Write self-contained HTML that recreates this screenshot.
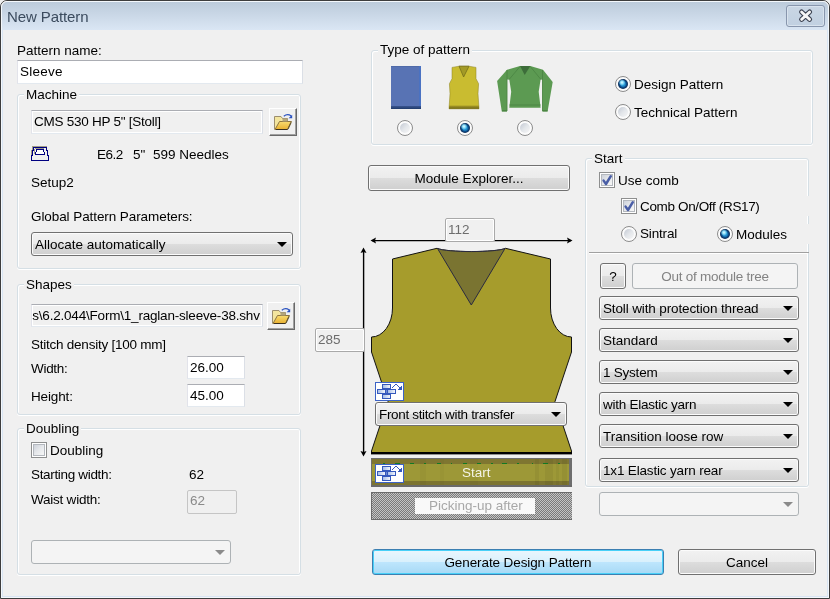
<!DOCTYPE html>
<html><head><meta charset="utf-8">
<style>
*,*::before,*::after{margin:0;padding:0;box-sizing:border-box}
html,body{width:830px;height:599px;overflow:hidden;background:#f0f0f0}
body{position:relative;font-family:"Liberation Sans",sans-serif;font-size:13.5px;color:#000}
.a{position:absolute}
.t{position:absolute;will-change:transform;font-size:13.5px;line-height:15px;white-space:nowrap}
.gb{position:absolute;border:1px solid #d5dfe5;border-radius:3px;box-shadow:inset 1px 1px 0 #fff,inset -1px 0 0 #fff,0 1px 0 #fff}
.gt{position:absolute;will-change:transform;background:#f0f0f0;padding:0 2px;font-size:13.5px;line-height:15px;white-space:nowrap}
.btn{position:absolute;will-change:transform;border:1px solid #707070;border-radius:3px;background:linear-gradient(#f2f2f2,#ebebeb 50%,#dddddd 50%,#cfcfcf);box-shadow:inset 0 0 0 1px #fbfbfb;text-align:center;line-height:22px;white-space:nowrap}
.dd{position:absolute;border:1px solid #707070;border-radius:3px;background:linear-gradient(#f2f2f2,#ebebeb 50%,#dddddd 50%,#cfcfcf);box-shadow:inset 0 0 0 1px #fbfbfb;white-space:nowrap}
.dd span{position:absolute;will-change:transform;left:3px;top:4px;line-height:15px}
.arr{position:absolute;right:5px;top:9px;width:0;height:0;border-left:5px solid transparent;border-right:5px solid transparent;border-top:5px solid #000}
.ed{position:absolute;background:#fff;border:1px solid #e3e9ef;border-top-color:#abadb3;border-left-color:#e2e3ea;border-right-color:#dbdfe6}
.ro{position:absolute;background:#f0f0f0;border:1px solid #e3e9ef;border-top-color:#abadb3;border-left-color:#e2e3ea;border-right-color:#dbdfe6;box-shadow:inset 0 0 0 1px #fff}
.rad{position:absolute;width:16px;height:16px;border-radius:50%;border:1px solid #8c8c8c;background:#fbfbfb}
.rad::before{content:"";position:absolute;left:2px;top:2px;width:10px;height:10px;border-radius:50%;background:linear-gradient(135deg,#c3c9d3,#e3e6ea 50%,#f6f6f6)}
.rad.on::before{left:2px;top:2px;width:10px;height:10px;background:radial-gradient(circle at 40% 35%,#e9fcff 0,#8ee0fa 16%,rgba(60,170,230,0) 38%),radial-gradient(circle at 50% 50%,#33a6e0 0,#1d8ccc 30%,#0d4a86 50%,#0a2c58 68%,#0b2448 100%)}
.chk{position:absolute;width:16px;height:16px;border:1px solid #8e8f8f;background:#fff}
.chk::before{content:"";position:absolute;left:1px;top:1px;width:12px;height:12px;border:1px solid #b4b8be;background:linear-gradient(135deg,#cdd2da,#e6e8eb 50%,#f7f7f7)}
.chk.on::after{content:"";position:absolute;left:0;top:0;width:14px;height:14px;background:no-repeat center/14px 14px}
</style></head><body>

<svg width="0" height="0" style="position:absolute"><defs><linearGradient id="brk" x1="0" y1="0" x2="1" y2="0"><stop offset="0" stop-color="#a7bee8"/><stop offset="1" stop-color="#f2f5fb"/></linearGradient></defs></svg>
<!-- window frame -->
<div class="a" style="left:0;top:0;width:830px;height:599px;border:1px solid #3d3d3d;border-radius:7px 7px 0 0;background:#f0f0f0"></div>
<div class="a" style="left:1px;top:1px;width:828px;height:597px;border:1px solid #f4f8fc;border-radius:6px 6px 0 0"></div>
<div class="a" style="left:2px;top:2px;width:826px;height:28px;background:linear-gradient(#bccbdb,#dae6f4);border-radius:5px 5px 0 0"></div>
<div class="a" style="left:2px;top:30px;width:826px;height:567px;border:1px solid #d9e5f3;border-top:0"></div>
<div class="t" style="left:7px;top:8px;font-size:15px;line-height:17px;color:#3b4b5e;letter-spacing:-0.1px">New Pattern</div>
<!-- close button -->
<div class="a" style="left:786px;top:5px;width:39px;height:22px;border:1px solid #8896ad;border-radius:3px;background:linear-gradient(#c9d6e4,#c1d0e1);box-shadow:inset 0 0 0 1px #d9e3ee"></div>
<svg class="a" style="left:786px;top:5px" width="39" height="22" viewBox="786 5 39 22">
<path d="M801.6 12 L805.6 15.7 L809.6 12 M801.6 19.4 L805.6 15.7 L809.6 19.4" stroke="#3b4150" stroke-width="5" stroke-linecap="round" stroke-linejoin="round" fill="none"/>
<path d="M801.6 12 L805.6 15.7 L809.6 12 M801.6 19.4 L805.6 15.7 L809.6 19.4" stroke="#f6f6f6" stroke-width="2.8" stroke-linecap="round" stroke-linejoin="round" fill="none"/>
</svg>

<!-- LEFT PANEL -->
<div class="t" style="left:17px;top:43px">Pattern name:</div>
<div class="ed" style="left:17px;top:60px;width:286px;height:24px"></div>
<div class="t" style="left:20px;top:64px;letter-spacing:0.26px">Sleeve</div>

<div class="gb" style="left:17px;top:94px;width:284px;height:175px"></div>
<div class="gt" style="left:24px;top:87px">Machine</div>
<div class="ro" style="left:31px;top:110px;width:232px;height:24px"></div>
<div class="t" style="left:34px;top:114px;letter-spacing:-0.25px">CMS 530 HP 5" [Stoll]</div>
<div class="a" style="left:269px;top:108px;width:28px;height:28px;border:1px solid;border-color:#fff #696969 #696969 #fff;background:#f0f0f0;box-shadow:inset -1px -1px 0 #a0a0a0"></div>
<svg class="a" style="left:269px;top:108px" width="28" height="28" viewBox="269 108 28 28">
<defs><linearGradient id="fg269" x1="0" y1="0" x2="0" y2="1"><stop offset="0" stop-color="#f9dc70"/><stop offset="1" stop-color="#e8b030"/></linearGradient></defs>
<path d="M274.5 129.5 L274.5 116.5 L281 116.5 L282.5 118.5 L287.5 118.5 L287.5 122" fill="#f5e8a6" stroke="#9c8e6e" stroke-width="1"/>
<rect x="275" y="117" width="6" height="12" fill="#f3e59e"/>
<path d="M275 129.5 L279.5 121.5 L291.5 121.5 L287.5 129.5 Z" fill="url(#fg269)" stroke="#8c7440" stroke-width="1" stroke-linejoin="round"/>
<path d="M276 129.5 L287.5 129.5" stroke="#3a3020" stroke-width="1"/><rect x="282.5" y="118.5" width="5" height="3" fill="#b3a57c"/>
<path d="M288 129 L291 122.5" stroke="#6a5a30" stroke-width="1.2"/>
<path d="M283.8 116.2 Q287.5 113.2 291.2 116" stroke="#2a52c0" stroke-width="1.2" fill="none"/>
<path d="M292.2 114.8 L292.2 118.2 L288.6 118.2 Z" fill="#2a52c0"/>
</svg>
<svg class="a" style="left:28px;top:144px" width="24" height="20" viewBox="28 144 24 20" shape-rendering="crispEdges">
<rect x="32" y="146" width="15" height="1" fill="#a09c88"/>
<rect x="32" y="147" width="1" height="3" fill="#a09c88"/>
<rect x="31" y="150" width="1" height="5" fill="#a09c88"/>
<rect x="34" y="149" width="1" height="5" fill="#a09c88"/>
<rect x="35" y="148" width="9" height="1" fill="#a09c88"/>
<g fill="#000080">
<rect x="33" y="147" width="14" height="1"/>
<rect x="33" y="147" width="1" height="4"/><rect x="46" y="147" width="1" height="4"/>
<rect x="32" y="150" width="1" height="6"/><rect x="47" y="150" width="1" height="6"/>
<rect x="31" y="155" width="1" height="6"/><rect x="48" y="155" width="1" height="6"/>
<rect x="31" y="160" width="18" height="1"/>
<rect x="36" y="149" width="8" height="1"/>
<rect x="36" y="149" width="1" height="3"/><rect x="43" y="149" width="1" height="3"/>
<rect x="35" y="152" width="1" height="3"/><rect x="44" y="152" width="1" height="3"/>
<rect x="35" y="154" width="10" height="1"/>
</g>
<rect x="37" y="150" width="6" height="2" fill="#fff"/><rect x="36" y="152" width="8" height="2" fill="#fff"/>
</svg>
<div class="t" style="left:97px;top:147px;letter-spacing:-0.5px">E6.2</div>
<div class="t" style="left:133px;top:147px">5"</div>
<div class="t" style="left:153px;top:147px">599 Needles</div>
<div class="t" style="left:31px;top:175px">Setup2</div>
<div class="t" style="left:31px;top:209px;letter-spacing:-0.08px">Global Pattern Parameters:</div>
<div class="dd" style="left:31px;top:232px;width:262px;height:24px"><span>Allocate automatically</span><i class="arr"></i></div>

<div class="gb" style="left:17px;top:284px;width:284px;height:131px"></div>
<div class="gt" style="left:24px;top:277px">Shapes</div>
<div class="ro" style="left:31px;top:304px;width:232px;height:23px;overflow:hidden"><div class="t" style="right:2px;top:3px;letter-spacing:-0.2px">C:\Stoll\M1plus\6.2.044\Form\1_raglan-sleeve-38.shv</div></div>
<div class="a" style="left:267px;top:302px;width:28px;height:28px;border:1px solid;border-color:#fff #696969 #696969 #fff;background:#f0f0f0;box-shadow:inset -1px -1px 0 #a0a0a0"></div>
<svg class="a" style="left:267px;top:302px" width="28" height="28" viewBox="269 108 28 28">
<defs><linearGradient id="fg267" x1="0" y1="0" x2="0" y2="1"><stop offset="0" stop-color="#f9dc70"/><stop offset="1" stop-color="#e8b030"/></linearGradient></defs>
<path d="M274.5 129.5 L274.5 116.5 L281 116.5 L282.5 118.5 L287.5 118.5 L287.5 122" fill="#f5e8a6" stroke="#9c8e6e" stroke-width="1"/>
<rect x="275" y="117" width="6" height="12" fill="#f3e59e"/>
<path d="M275 129.5 L279.5 121.5 L291.5 121.5 L287.5 129.5 Z" fill="url(#fg267)" stroke="#8c7440" stroke-width="1" stroke-linejoin="round"/>
<path d="M276 129.5 L287.5 129.5" stroke="#3a3020" stroke-width="1"/><rect x="282.5" y="118.5" width="5" height="3" fill="#b3a57c"/>
<path d="M288 129 L291 122.5" stroke="#6a5a30" stroke-width="1.2"/>
<path d="M283.8 116.2 Q287.5 113.2 291.2 116" stroke="#2a52c0" stroke-width="1.2" fill="none"/>
<path d="M292.2 114.8 L292.2 118.2 L288.6 118.2 Z" fill="#2a52c0"/>
</svg>
<div class="t" style="left:31px;top:337px;letter-spacing:-0.24px">Stitch density [100 mm]</div>
<div class="t" style="left:31px;top:361px;letter-spacing:-0.3px">Width:</div>
<div class="ed" style="left:187px;top:356px;width:58px;height:23px"></div>
<div class="t" style="left:190px;top:360px">26.00</div>
<div class="t" style="left:31px;top:389px;letter-spacing:-0.13px">Height:</div>
<div class="ed" style="left:187px;top:384px;width:58px;height:23px"></div>
<div class="t" style="left:190px;top:388px">45.00</div>

<div class="gb" style="left:17px;top:428px;width:284px;height:147px"></div>
<div class="gt" style="left:24px;top:421px">Doubling</div>
<div class="chk" style="left:31px;top:442px"></div>
<div class="t" style="left:50px;top:443px">Doubling</div>
<div class="t" style="left:31px;top:467px;letter-spacing:-0.33px">Starting width:</div>
<div class="t" style="left:189px;top:467px">62</div>
<div class="t" style="left:31px;top:492px;letter-spacing:-0.23px">Waist width:</div>
<div class="a" style="left:187px;top:490px;width:50px;height:24px;border:1px solid #c5c5c5;background:#f0f0f0;border-radius:2px"></div>
<div class="t" style="left:190px;top:493px;color:#8a8a8a">62</div>
<div class="a" style="left:31px;top:540px;width:200px;height:24px;border:1px solid #adb2b5;border-radius:3px;background:#f4f4f4"><i class="arr" style="border-top-color:#8a8a8a"></i></div>


<!-- TYPE OF PATTERN -->
<div class="gb" style="left:371px;top:50px;width:442px;height:95px"></div>
<div class="gt" style="left:378px;top:42px">Type of pattern</div>
<svg class="a" style="left:380px;top:60px" width="190" height="60" viewBox="380 60 190 60">
<defs>
<linearGradient id="bb" x1="0" y1="0" x2="0" y2="1"><stop offset="0" stop-color="#3a5590"/><stop offset="1" stop-color="#1f3a6a"/></linearGradient>
<linearGradient id="yb" x1="0" y1="0" x2="0" y2="1"><stop offset="0" stop-color="#a99c28"/><stop offset="1" stop-color="#6f6618"/></linearGradient>
</defs>
<rect x="391" y="66" width="30" height="43" fill="#5873b4"/>
<rect x="391" y="66" width="30" height="1" fill="#4f6aa8"/>
<rect x="419" y="66" width="2" height="40" fill="#4a72c2"/>
<rect x="391" y="106" width="30" height="3" fill="url(#bb)"/>
<path d="M452 67.4 L459 66.2 L469 66.2 L476 67.4 L476 78.7 L478.6 83.7 L478 93.7 L479 108.8 L449 108.8 L450 93.7 L449.4 83.7 L452 78.7 Z" fill="#c9bc30" stroke="#8a8020" stroke-width="0.5"/>
<path d="M459 66.2 L469 66.2 L463.6 77 Z" fill="#a39a26" stroke="#6f6818" stroke-width="0.7"/>
<rect x="449" y="105.5" width="30" height="3.3" fill="url(#yb)"/>
<path d="M520 66 L530.3 66 L543 69.8 L552.7 82 L547.6 111.4 L542.5 111.4 L542.5 79.6 L540.6 79.6 L538.7 91.8 L540.6 107.7 L509.3 107.7 L511.2 91.8 L509.3 79.6 L507 79.6 L507 111.4 L501.8 111.4 L497.1 81 L507 69.8 Z" fill="#5c9a52"/>
<path d="M520 66 L530.3 66 L524.7 75 Z" fill="#3d6d3a"/>
<path d="M520 66.5 L509 79.6 M530.3 66.5 L541 79.6 M507 70 L507 111 M542.5 70 L542.5 111" stroke="#4c8644" stroke-width="0.9" fill="none"/>
<rect x="509.5" y="104.5" width="31" height="1" fill="#4c8644"/>
<rect x="502" y="110" width="5" height="1.4" fill="#4c8644"/>
<rect x="542.5" y="110" width="5" height="1.4" fill="#4c8644"/>
</svg>
<div class="rad" style="left:397px;top:120px"></div>
<div class="rad on" style="left:457px;top:120px"></div>
<div class="rad" style="left:517px;top:120px"></div>
<div class="rad on" style="left:615px;top:76px"></div>
<div class="t" style="left:634px;top:77px">Design Pattern</div>
<div class="rad" style="left:615px;top:104px"></div>
<div class="t" style="left:634px;top:105px">Technical Pattern</div>

<!-- MODULE EXPLORER -->
<div class="btn" style="left:368px;top:165px;width:202px;height:26px;line-height:26px">Module Explorer...</div>

<!-- START GROUP -->
<div class="gb" style="left:585px;top:158px;width:224px;height:329px"></div>
<div class="gt" style="left:592px;top:151px">Start</div>
<div class="chk" style="left:599px;top:172px"><svg class="a" style="left:0;top:0" width="14" height="14" viewBox="0 0 14 14"><path d="M3.6 7.6 L6 11 L10.8 3.2" stroke="#4a5ea6" stroke-width="2.5" fill="none" stroke-linecap="round" stroke-linejoin="round"/></svg></div>
<div class="t" style="left:618px;top:173px">Use comb</div>
<div class="chk" style="left:621px;top:198px"><svg class="a" style="left:0;top:0" width="14" height="14" viewBox="0 0 14 14"><path d="M3.6 7.6 L6 11 L10.8 3.2" stroke="#4a5ea6" stroke-width="2.5" fill="none" stroke-linecap="round" stroke-linejoin="round"/></svg></div>
<div class="t" style="left:640px;top:199px;letter-spacing:-0.35px">Comb On/Off (RS17)</div>
<div class="rad" style="left:621px;top:226px"></div>
<div class="t" style="left:640px;top:226px;letter-spacing:-0.17px">Sintral</div>
<div class="rad on" style="left:717px;top:226px"></div>
<div class="t" style="left:736px;top:227px">Modules</div>
<div class="a" style="left:806px;top:196px;width:4px;height:20px;background:#f0f0f0"></div>
<div class="a" style="left:806px;top:224px;width:4px;height:20px;background:#f0f0f0"></div>
<div class="a" style="left:589px;top:252px;width:220px;height:1px;background:#a0a0a0"></div>
<div class="a" style="left:589px;top:253px;width:219px;height:1px;background:#fff"></div>
<div class="btn" style="left:600px;top:263px;width:26px;height:26px;line-height:26px">?</div>
<div class="a" style="will-change:transform;left:632px;top:263px;width:166px;height:26px;border:1px solid #adb2b5;border-radius:3px;background:#f4f4f4;color:#838383;text-align:center;line-height:25px;letter-spacing:-0.23px">Out of module tree</div>
<div class="dd" style="left:599px;top:296px;width:200px;height:24px"><span style="letter-spacing:-0.13px">Stoll with protection thread</span><i class="arr"></i></div>
<div class="dd" style="left:599px;top:328px;width:200px;height:24px"><span>Standard</span><i class="arr"></i></div>
<div class="dd" style="left:599px;top:360px;width:200px;height:24px"><span style="letter-spacing:-0.23px">1 System</span><i class="arr"></i></div>
<div class="dd" style="left:599px;top:392px;width:200px;height:24px"><span style="letter-spacing:-0.25px">with Elastic yarn</span><i class="arr"></i></div>
<div class="dd" style="left:599px;top:424px;width:200px;height:24px"><span>Transition loose row</span><i class="arr"></i></div>
<div class="dd" style="left:599px;top:458px;width:200px;height:24px"><span style="letter-spacing:-0.17px">1x1 Elastic yarn rear</span><i class="arr"></i></div>
<div class="a" style="left:599px;top:492px;width:200px;height:24px;border:1px solid #adb2b5;border-radius:3px;background:#f4f4f4"><i class="arr" style="border-top-color:#8a8a8a"></i></div>


<!-- CENTER SHAPE -->
<svg class="a" style="left:300px;top:210px" width="290" height="320" viewBox="300 210 290 320" shape-rendering="geometricPrecision">
<defs>
<pattern id="chk" x="371" y="492" width="2" height="2" patternUnits="userSpaceOnUse"><rect width="2" height="2" fill="#c4c4c4"/><rect width="1" height="1" fill="#7a7a7a"/><rect x="1" y="1" width="1" height="1" fill="#7a7a7a"/></pattern>
</defs>
<!-- arrows -->
<line x1="372" y1="240.6" x2="571" y2="240.6" stroke="#000" stroke-width="1.4"/>
<path d="M370.5 240.5 L376 237.5 L375 240.5 L376 243.5 Z" fill="#000"/>
<path d="M572.5 240.5 L567 237.5 L568 240.5 L567 243.5 Z" fill="#000"/>
<line x1="363.6" y1="250" x2="363.6" y2="454" stroke="#000" stroke-width="1.4"/>
<path d="M363.5 247.5 L360.5 253 L363.5 252 L366.5 253 Z" fill="#000"/>
<path d="M363.5 456.5 L360.5 451 L363.5 452 L366.5 451 Z" fill="#000"/>
<!-- body -->
<path d="M392.5 259 L437 248.3 C447 252.6 496 252.6 505.5 248.3 L550.5 259 L550.5 308 A21 29 0 0 0 571.5 337 L571.5 352 L555 401.5 L571.5 451 L571.5 453 L371.5 453 L371.5 451 L388 401.5 L371.5 352 L371.5 337 A21 29 0 0 0 392.5 308 Z" fill="#a69c2c" stroke="#111" stroke-width="1"/>
<path d="M437.5 248.5 C447 252.6 496 252.6 505 248.5 L471.3 305 Z" fill="#7a7431" stroke="#2a2a40" stroke-width="1"/>
<rect x="371" y="452" width="201" height="2.4" fill="#000"/>
<!-- start bar -->
<rect x="371" y="458" width="201" height="29" fill="#6e6e6e"/><rect x="371" y="485" width="201" height="2" fill="#6a6a6a"/>
<rect x="372" y="459" width="197" height="26" fill="#9d9837"/>
<rect x="372" y="459" width="197" height="5" fill="#7f7631"/>
<rect x="372" y="481" width="197" height="4" fill="#7c7430"/>
<rect x="420" y="459" width="6" height="26" fill="#000" opacity="0.03"/><rect x="440" y="459" width="4" height="26" fill="#000" opacity="0.025"/><rect x="470" y="459" width="8" height="26" fill="#000" opacity="0.02"/><rect x="535" y="459" width="4" height="26" fill="#000" opacity="0.05"/><rect x="545" y="459" width="8" height="26" fill="#000" opacity="0.05"/><rect x="556" y="459" width="3" height="26" fill="#000" opacity="0.04"/><rect x="562" y="459" width="5" height="26" fill="#000" opacity="0.05"/>
<rect x="383" y="463" width="2" height="1" fill="#117a24"/><rect x="395" y="463" width="5" height="1" fill="#117a24"/><rect x="410" y="463" width="4" height="1" fill="#117a24"/><rect x="424" y="463" width="2" height="1" fill="#117a24"/><rect x="437" y="463" width="4" height="1" fill="#117a24"/><rect x="451" y="463" width="1" height="1" fill="#117a24"/><rect x="463" y="463" width="4" height="1" fill="#117a24"/><rect x="477" y="463" width="4" height="1" fill="#117a24"/><rect x="491" y="463" width="2" height="1" fill="#117a24"/><rect x="502" y="463" width="5" height="1" fill="#117a24"/><rect x="517" y="463" width="2" height="1" fill="#117a24"/><rect x="532" y="463" width="1" height="1" fill="#117a24"/><rect x="543" y="463" width="5" height="1" fill="#117a24"/><rect x="558" y="463" width="2" height="1" fill="#117a24"/>
<!-- picking up -->
<rect x="371" y="492" width="201" height="28" fill="url(#chk)"/>
<rect x="371" y="492" width="201" height="1" fill="#6a6a6a"/>
<rect x="371" y="492" width="1" height="28" fill="#6a6a6a"/>
<rect x="371" y="519" width="201" height="1" fill="#6a6a6a"/>
<rect x="415" y="498" width="120" height="16" fill="#f9f9f9"/>
</svg>
<div class="a" style="left:445px;top:218px;width:50px;height:24px;border:1px solid #a9a9a9;border-radius:2px;background:#f0f0f0;box-shadow:inset 0 0 0 1px #fff"></div>
<div class="t" style="left:448px;top:222px;color:#6d6d6d">112</div>
<div class="a" style="left:315px;top:328px;width:50px;height:24px;border:1px solid #a9a9a9;border-radius:2px;background:#f0f0f0;box-shadow:inset 0 0 0 1px #fff"></div>
<div class="t" style="left:318px;top:332px;color:#6d6d6d">285</div>
<svg class="a" style="left:375px;top:382px" width="29" height="19" viewBox="375 382 29 19" shape-rendering="crispEdges">
<rect x="375" y="382" width="29" height="19" fill="#3c63c6"/>
<rect x="376" y="383" width="27" height="17" fill="#fff"/>
<g fill="#3559bd">
<rect x="382" y="384" width="9" height="5"/>
<rect x="377" y="389" width="19" height="5"/>
<rect x="382" y="394" width="9" height="5"/>
</g>
<rect x="383" y="385" width="7" height="3" fill="url(#brk)"/>
<rect x="378" y="390" width="7" height="3" fill="url(#brk)"/>
<rect x="388" y="390" width="7" height="3" fill="url(#brk)"/>
<rect x="383" y="395" width="7" height="3" fill="url(#brk)"/>
<rect x="386" y="390" width="1" height="3" fill="#6d88d0"/>
<g fill="#3559bd">
<rect x="392" y="387" width="1" height="1"/><rect x="393" y="386" width="1" height="1"/><rect x="394" y="385" width="1" height="1"/>
<rect x="395" y="384" width="2" height="1"/><rect x="397" y="385" width="1" height="1"/><rect x="398" y="386" width="1" height="1"/>
<rect x="399" y="387" width="1" height="1"/>
<rect x="401" y="386" width="1" height="4"/><rect x="400" y="387" width="1" height="3"/><rect x="399" y="388" width="1" height="2"/><rect x="398" y="389" width="1" height="1"/>
</g>
</svg>
<div class="dd" style="left:375px;top:402px;width:192px;height:24px"><span style="letter-spacing:-0.34px">Front stitch with transfer</span><i class="arr"></i></div>
<svg class="a" style="left:375px;top:464px" width="29" height="19" viewBox="375 382 29 19" shape-rendering="crispEdges">
<rect x="375" y="382" width="29" height="19" fill="#3c63c6"/>
<rect x="376" y="383" width="27" height="17" fill="#fff"/>
<g fill="#3559bd">
<rect x="382" y="384" width="9" height="5"/>
<rect x="377" y="389" width="19" height="5"/>
<rect x="382" y="394" width="9" height="5"/>
</g>
<rect x="383" y="385" width="7" height="3" fill="url(#brk)"/>
<rect x="378" y="390" width="7" height="3" fill="url(#brk)"/>
<rect x="388" y="390" width="7" height="3" fill="url(#brk)"/>
<rect x="383" y="395" width="7" height="3" fill="url(#brk)"/>
<rect x="386" y="390" width="1" height="3" fill="#6d88d0"/>
<g fill="#3559bd">
<rect x="392" y="387" width="1" height="1"/><rect x="393" y="386" width="1" height="1"/><rect x="394" y="385" width="1" height="1"/>
<rect x="395" y="384" width="2" height="1"/><rect x="397" y="385" width="1" height="1"/><rect x="398" y="386" width="1" height="1"/>
<rect x="399" y="387" width="1" height="1"/>
<rect x="401" y="386" width="1" height="4"/><rect x="400" y="387" width="1" height="3"/><rect x="399" y="388" width="1" height="2"/><rect x="398" y="389" width="1" height="1"/>
</g>
</svg>
<div class="t" style="left:462px;top:465px;color:#f4f4e8">Start</div>
<div class="t" style="left:429px;top:498px;color:#a8a8a8">Picking-up after</div>

<!-- BOTTOM BUTTONS -->
<div class="a" style="will-change:transform;left:372px;top:549px;width:292px;height:26px;border:1px solid #3c7fb1;border-radius:3px;background:linear-gradient(#eaf6fd,#d9f0fc 50%,#bee6fd 50%,#a7d9f5);box-shadow:inset 0 0 0 1px #48d0f8;text-align:center;line-height:26px;letter-spacing:-0.1px">Generate Design Pattern</div>
<div class="btn" style="left:678px;top:549px;width:138px;height:26px;line-height:26px">Cancel</div>

</body></html>
